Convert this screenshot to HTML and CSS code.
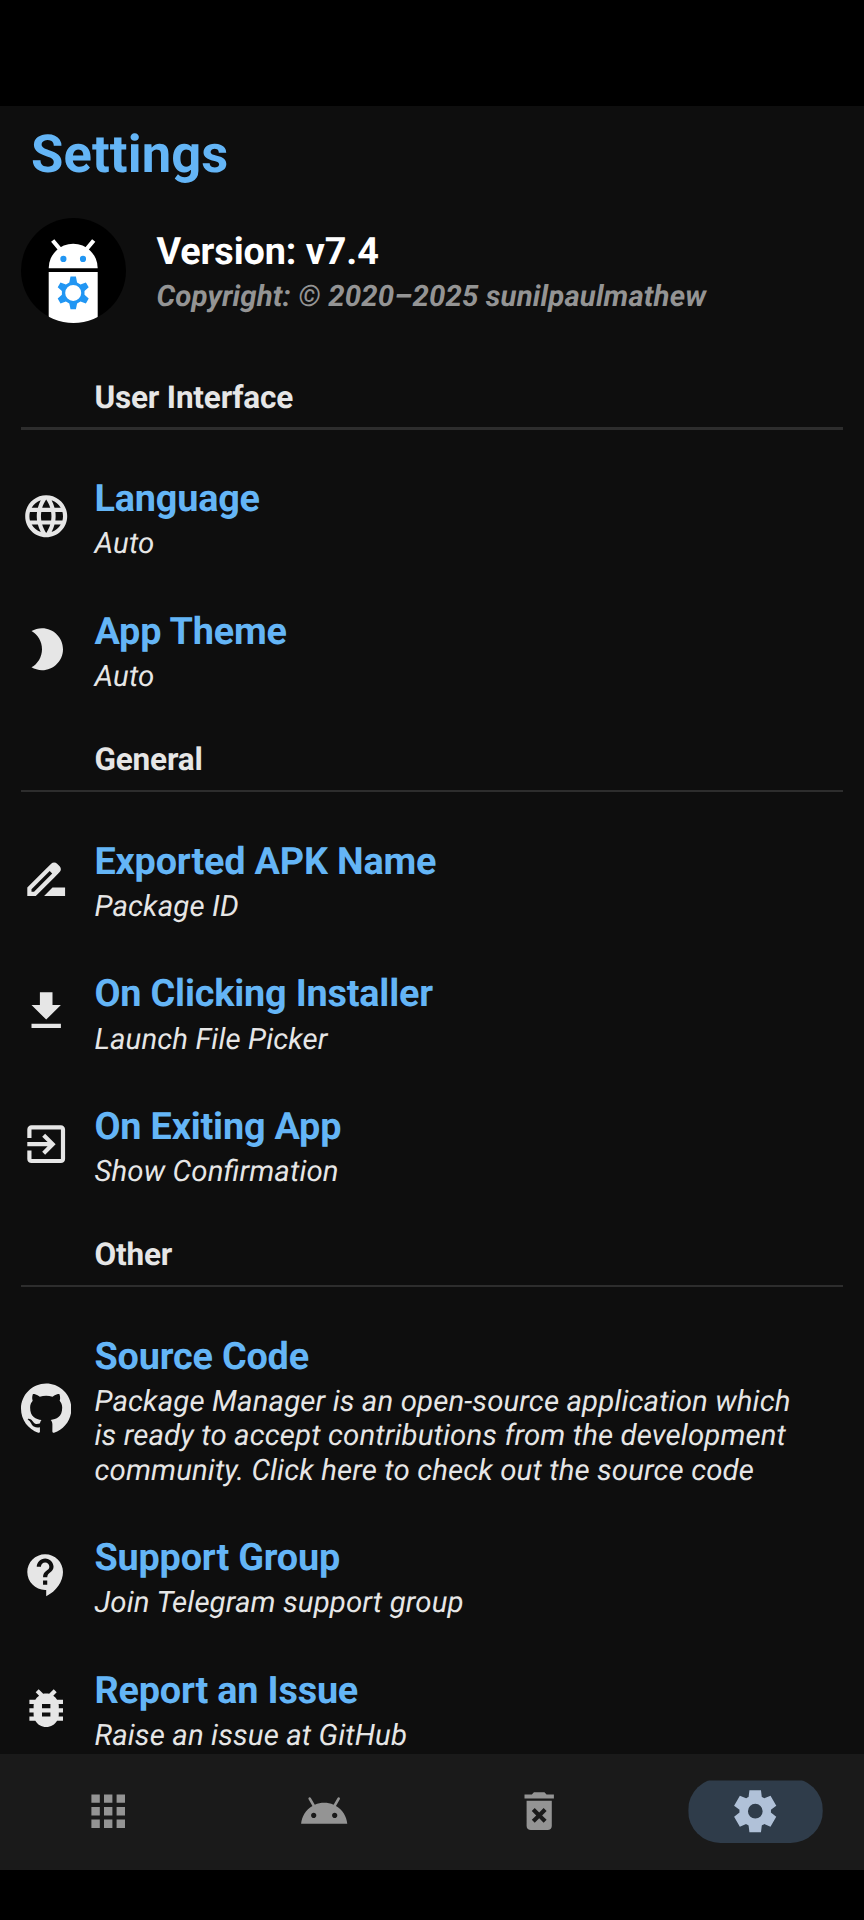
FILE: index.html
```html
<!DOCTYPE html>
<html lang="en">
<head>
<meta charset="utf-8">
<title>Settings</title>
<link rel="stylesheet" href="styles.css">
</head>
<body>
<div class="screen">
  <main class="content">
    <h1 class="page-title">Settings</h1>
    <section class="about">
      <svg class="avatar" viewBox="0 0 105 105">
        <defs><clipPath id="disc"><circle cx="52.5" cy="52.5" r="52.5"/></clipPath></defs>
        <circle cx="52.5" cy="52.5" r="52.5" fill="#000"/>
        <g clip-path="url(#disc)">
          <path d="M27.700 50.200a24.500 24.500 0 0 1 49 0z" fill="#fff"/>
          <path d="M31.700 22.500l7.500 9M72.700 22.500l-7.500 9" stroke="#fff" stroke-width="4.200"/>
          <path d="M27.700 54h49v52h-49z" fill="#fff"/>
          <path fill="#2196f3" d="M39.300 40.900a3.100 3.100 0 1 0 6.200 0a3.100 3.100 0 1 0-6.200 0zM58.900 40.900a3.100 3.100 0 1 0 6.200 0a3.100 3.100 0 1 0-6.200 0z"/>
          <path fill="#2196f3" fill-rule="evenodd" d="M49.500 58.500h5.400l1.200 5.900 3.400 2 5.400-2 2.800 4.800-4.200 3.900v3.600l4.200 3.900-2.800 4.800-5.400-2-3.400 2-1.200 5.900h-5.400l-1.200-5.900-3.400-2-5.400 2-2.800-4.800 4.200-3.900v-3.600l-4.200-3.900 2.800-4.800 5.400 2 3.400-2zM52.200 66.900a8 8 0 1 0 0 16a8 8 0 1 0 0-16z"/>
        </g>
      </svg>
      <div class="about-text">
        <div class="version">Version: v7.4</div>
        <div class="copyright">Copyright: © 2020–2025 sunilpaulmathew</div>
      </div>
    </section>

    <h2 class="category">User Interface</h2>
    <div class="item">
      <svg class="icon" viewBox="0 0 24 24"><path d="M11.990 2C6.470 2 2 6.480 2 12s4.470 10 9.990 10C17.520 22 22 17.520 22 12S17.520 2 11.990 2zm6.930 6h-2.950c-.32-1.250-.78-2.450-1.380-3.560 1.840.63 3.370 1.910 4.330 3.560zM12 4.040c.83 1.200 1.480 2.530 1.910 3.960h-3.820c.43-1.430 1.080-2.760 1.910-3.960zM4.260 14C4.100 13.360 4 12.690 4 12s.1-1.360.26-2h3.380c-.08.66-.14 1.320-.14 2s.06 1.340.14 2H4.260zm.82 2h2.950c.32 1.250.78 2.450 1.380 3.560-1.840-.63-3.370-1.900-4.330-3.560zm2.950-8H5.080c.96-1.660 2.490-2.930 4.330-3.560C8.810 5.550 8.350 6.750 8.030 8zM12 19.960c-.83-1.200-1.480-2.530-1.910-3.960h3.820c-.43 1.430-1.080 2.760-1.910 3.960zM14.340 14H9.660c-.09-.66-.16-1.320-.16-2s.07-1.350.16-2h4.680c.09.65.16 1.320.16 2s-.07 1.340-.16 2zm.25 5.560c.6-1.110 1.060-2.310 1.380-3.560h2.950c-.96 1.650-2.490 2.930-4.330 3.560zM16.360 14c.08-.66.14-1.320.14-2s-.06-1.340-.14-2h3.380c.16.64.26 1.310.26 2s-.1 1.360-.26 2h-3.380z"/></svg>
      <div class="item-text"><h3 class="item-title">Language</h3><p class="item-sub">Auto</p></div>
    </div>
    <div class="item">
      <svg class="icon" viewBox="0 0 24 24"><path d="M10 2c-1.820 0-3.530.5-5 1.350C7.990 5.080 10 8.300 10 12s-2.010 6.920-5 8.650C6.470 21.500 8.180 22 10 22c5.520 0 10-4.480 10-10S15.520 2 10 2z"/></svg>
      <div class="item-text"><h3 class="item-title">App Theme</h3><p class="item-sub">Auto</p></div>
    </div>

    <h2 class="category">General</h2>
    <div class="item">
      <svg class="icon" viewBox="0 0 24 24"><path d="M18.410 5.800L17.200 4.590c-.78-.78-2.050-.78-2.830 0l-2.680 2.680L3 15.960V20h4.040l8.740-8.740 2.630-2.630c.79-.78.79-2.040 0-2.830zM6.210 18H5v-1.210l8.660-8.660 1.210 1.210L6.210 18zM11 20l4-4h6v4H11z"/></svg>
      <div class="item-text"><h3 class="item-title">Exported APK Name</h3><p class="item-sub">Package ID</p></div>
    </div>
    <div class="item">
      <svg class="icon" viewBox="0 0 24 24"><path d="M19 9h-4V3H9v6H5l7 7 7-7zM5 18v2h14v-2H5z"/></svg>
      <div class="item-text"><h3 class="item-title">On Clicking Installer</h3><p class="item-sub">Launch File Picker</p></div>
    </div>
    <div class="item">
      <svg class="icon" viewBox="0 0 24 24"><path d="M10.090 15.590L11.500 17l5-5-5-5-1.410 1.410L12.670 11H3v2h9.670l-2.580 2.590zM19 3H5c-1.110 0-2 .9-2 2v4h2V5h14v14H5v-4H3v4c0 1.100.89 2 2 2h14c1.100 0 2-.9 2-2V5c0-1.100-.9-2-2-2z"/></svg>
      <div class="item-text"><h3 class="item-title">On Exiting App</h3><p class="item-sub">Show Confirmation</p></div>
    </div>

    <h2 class="category">Other</h2>
    <div class="item">
      <svg class="icon" viewBox="0 0 24 24"><path d="M12 .297c-6.630 0-12 5.373-12 12 0 5.303 3.438 9.800 8.205 11.385.6.113.82-.258.82-.577 0-.285-.01-1.040-.015-2.040-3.338.724-4.042-1.610-4.042-1.610C4.422 18.070 3.633 17.700 3.633 17.700c-1.087-.744.084-.729.084-.729 1.205.084 1.838 1.236 1.838 1.236 1.070 1.835 2.809 1.305 3.495.998.108-.776.417-1.305.76-1.605-2.665-.3-5.466-1.332-5.466-5.930 0-1.310.465-2.380 1.235-3.220-.135-.303-.54-1.523.105-3.176 0 0 1.005-.322 3.300 1.230.96-.267 1.980-.399 3-.405 1.020.006 2.040.138 3 .405 2.280-1.552 3.285-1.230 3.285-1.230.645 1.653.24 2.873.12 3.176.765.84 1.230 1.910 1.230 3.220 0 4.610-2.805 5.625-5.475 5.920.42.36.81 1.096.81 2.220 0 1.606-.015 2.896-.015 3.286 0 .315.21.69.825.57C20.565 22.092 24 17.592 24 12.297c0-6.627-5.373-12-12-12"/></svg>
      <div class="item-text"><h3 class="item-title">Source Code</h3><p class="item-sub">Package Manager is an open-source application which<br>is ready to accept contributions from the development<br>community. Click here to check out the source code</p></div>
    </div>
    <div class="item">
      <svg class="icon" viewBox="0 0 24 24"><path d="M11.500 2C6.810 2 3 5.810 3 10.500S6.810 19 11.500 19h.5v3c4.860-2.340 8-7 8-11.500C20 5.810 16.190 2 11.500 2zm1 14.500h-2v-2h2v2zm0-3.500h-2c0-3.250 3-3 3-5 0-1.100-.9-2-2-2s-2 .9-2 2h-2c0-2.210 1.790-4 4-4s4 1.790 4 4c0 2.500-3 2.750-3 5z"/></svg>
      <div class="item-text"><h3 class="item-title">Support Group</h3><p class="item-sub">Join Telegram support group</p></div>
    </div>
    <div class="item">
      <svg class="icon" viewBox="0 0 24 24"><path d="M20 8h-2.810c-.45-.78-1.070-1.450-1.820-1.960L17 4.410 15.590 3l-2.170 2.170C12.960 5.060 12.490 5 12 5c-.49 0-.96.06-1.410.17L8.410 3 7 4.410l1.620 1.630C7.880 6.550 7.260 7.220 6.810 8H4v2h2.090c-.05.33-.09.66-.09 1v1H4v2h2v1c0 .34.04.67.09 1H4v2h2.810c1.040 1.790 2.970 3 5.190 3s4.150-1.210 5.190-3H20v-2h-2.090c.05-.33.09-.66.09-1v-1h2v-2h-2v-1c0-.34-.04-.67-.09-1H20V8zm-6 8h-4v-2h4v2zm0-4h-4v-2h4v2z"/></svg>
      <div class="item-text"><h3 class="item-title">Report an Issue</h3><p class="item-sub">Raise an issue at GitHub</p></div>
    </div>
  </main>

  <nav class="nav">
    <a class="tab"><svg class="nav-icon" viewBox="0 0 24 24"><path d="M4 8h4V4H4v4zm6 12h4v-4h-4v4zm-6 0h4v-4H4v4zm0-6h4v-4H4v4zm6 0h4v-4h-4v4zm6-10v4h4V4h-4zm-6 4h4V4h-4v4zm6 6h4v-4h-4v4zm0 6h4v-4h-4v4z"/></svg></a>
    <a class="tab"><svg class="nav-icon" viewBox="0 0 24 24"><path d="M17.600 9.480l1.840-3.180c.16-.31.04-.69-.26-.85-.29-.15-.65-.06-.83.22l-1.880 3.240c-2.860-1.210-6.080-1.210-8.940 0L5.650 5.670c-.19-.29-.58-.38-.87-.2-.28.18-.37.54-.22.83L6.400 9.480C3.300 11.250 1.280 14.440 1 18h22c-.28-3.560-2.300-6.750-5.400-8.520zM7 15.250c-.69 0-1.250-.56-1.250-1.250S6.310 12.750 7 12.750 8.250 13.310 8.250 14 7.690 15.250 7 15.250zm10 0c-.69 0-1.250-.56-1.250-1.250s.56-1.250 1.250-1.250 1.250.56 1.250 1.250-.56 1.250-1.250 1.250z"/></svg></a>
    <a class="tab"><svg class="nav-icon" viewBox="0 0 24 24"><path d="M6 19c0 1.100.9 2 2 2h8c1.100 0 2-.9 2-2V7H6v12zm2.460-7.120l1.410-1.410L12 12.590l2.120-2.120 1.410 1.410L13.410 14l2.120 2.120-1.410 1.410L12 15.410l-2.120 2.120-1.410-1.410L10.590 14l-2.130-2.120zM15.500 4l-1-1h-5l-1 1H5v2h14V4z"/></svg></a>
    <a class="tab tab-active"><svg class="nav-icon" viewBox="0 0 24 24"><path d="M9.250 22l-.4-3.200q-.325-.125-.612-.3t-.563-.375L4.700 19.375l-2.750-4.750 2.575-1.950Q4.500 12.500 4.500 12.338v-.675q0-.163.025-.338L1.950 9.375l2.750-4.750 2.975 1.250q.275-.2.575-.375t.6-.3l.4-3.200h5.500l.4 3.200q.325.125.613.3t.562.375l2.975-1.250 2.750 4.750-2.575 1.950q.025.175.025.338v.674q0 .163-.05.338l2.575 1.950-2.750 4.750-2.950-1.250q-.275.2-.575.375t-.6.3l-.4 3.200zm2.800-6.500q1.450 0 2.475-1.025T15.550 12t-1.025-2.475T12.050 8.500q-1.475 0-2.488 1.025T8.550 12t1.013 2.475T12.050 15.500"/></svg></a>
  </nav>
</div>
</body>
</html>
```
FILE: styles.css
```css
* { box-sizing: border-box; }
body {
  margin: 0;
  background: #000;
  font-family: Roboto, "Liberation Sans", sans-serif;
  font-feature-settings: "liga";
  text-rendering: geometricPrecision;
}
.screen {
  width: 864px;
  height: 1920px;
  padding: 105.5px 0 50.4px;
  display: flex;
  flex-direction: column;
  overflow: hidden;
}
.content {
  flex: 1;
  min-height: 0;
  overflow: hidden;
  padding: 18.3px 21px 0 20.8px;
  background: #0e0e0e;
}
h1, h2, h3, p { margin: 0; }
.page-title {
  padding-left: 10.3px;
  font-size: 52.5px;
  line-height: 61.5px;
  letter-spacing: 0.1px;
  font-weight: 700;
  color: #64b5f6;
}
.about {
  display: flex;
  align-items: center;
  gap: 30.7px;
  margin-top: 32.4px;
  height: 105px;
}
.avatar { width: 105px; height: 105px; flex: none; }
.about-text { padding-top: 3.6px; }
.version {
  font-size: 37.8px;
  line-height: 44.3px;
  letter-spacing: -0.1px;
  font-weight: 700;
  color: #fff;
}
.copyright {
  margin-top: 5.9px;
  font-size: 29.4px;
  line-height: 34.45px;
  letter-spacing: 0.14px;
  font-weight: 700;
  font-style: italic;
  color: #949494;
}
.category {
  height: 97.2px;
  padding: 26.8px 0 0 73.7px;
  font-size: 31.5px;
  line-height: 36.9px;
  letter-spacing: -0.19px;
  font-weight: 700;
  color: #e6e6e6;
  background: linear-gradient(#2d2d2d, #2d2d2d) 0 74.2px / 100% 2.1px no-repeat;
}
.about + .category {
  margin-top: 30.2px;
  background-size: 100% 3px;
}
.item {
  display: flex;
  align-items: center;
  gap: 23.3px;
}
.icon { width: 50.4px; height: 50.4px; flex: none; fill: #e6e6e6; }
.item-text { padding: 27.2px 0 20.8px; }
.item-title {
  font-size: 37.8px;
  line-height: 44.3px;
  letter-spacing: -0.19px;
  font-weight: 700;
  color: #64b5f6;
}
.item-sub {
  margin-top: 5.9px;
  font-size: 29.4px;
  line-height: 34.45px;
  letter-spacing: 0.12px;
  font-style: italic;
  color: #e6e6e6;
  white-space: nowrap;
}
.nav {
  height: 115.6px;
  flex: none;
  display: grid;
  grid-template-columns: repeat(4, 1fr);
  justify-items: center;
  align-items: center;
  padding: 0 0.5px 1.8px 0;
  background: #1a1a1a;
}
.tab {
  width: 134.4px;
  height: 65px;
  display: flex;
  align-items: center;
  justify-content: center;
}
.tab-active {
  border-radius: 33px;
  background: #2f3c4a;
  clip-path: inset(2px 0 0 0);
}
.nav-icon { width: 50.4px; height: 50.4px; fill: #949494; }
.tab-active .nav-icon { fill: #b0c1d8; }
```
